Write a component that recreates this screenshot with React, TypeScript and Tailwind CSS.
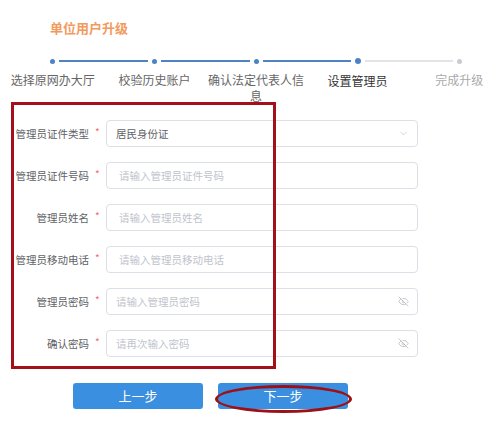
import { ChevronDown, EyeOff } from "lucide-react";

const steps = [
  { label: "选择原网办大厅", state: "done" },
  { label: "校验历史账户", state: "done" },
  { label: "确认法定代表人信息", state: "done" },
  { label: "设置管理员", state: "active" },
  { label: "完成升级", state: "todo" },
];

const fields = [
  { label: "管理员证件类型", value: "居民身份证", kind: "select" },
  { label: "管理员证件号码", placeholder: "请输入管理员证件号码" },
  { label: "管理员姓名", placeholder: "请输入管理员姓名" },
  { label: "管理员移动电话", placeholder: "请输入管理员移动电话" },
  { label: "管理员密码", placeholder: "请输入管理员密码", kind: "password" },
  { label: "确认密码", placeholder: "请再次输入密码", kind: "password" },
];

function StepBar() {
  return (
    <div>
      {/* dots + connecting lines */}
      <div className="ml-[50px] mt-[21px] flex h-[6px] w-[412px] items-center">
        {steps.map((s, i) => (
          <div key={s.label} className={i < steps.length - 1 ? "flex flex-1 items-center" : "flex items-center"}>
            <span
              className={
                s.state === "todo"
                  ? "block h-[5px] w-[5px] rounded-full bg-[#c8cbd0]"
                  : s.state === "active"
                  ? "block h-[6px] w-[6px] rounded-full bg-[#4a84c6]"
                  : "block h-[5px] w-[5px] rounded-full bg-[#4a84c6]"
              }
            />
            {i < steps.length - 1 && (
              <span
                className={
                  i < 3
                    ? "mx-[4px] block h-[2px] flex-1 bg-[#4f84c2]"
                    : "mx-[4px] block h-[2px] flex-1 bg-[#e2e4e8]"
                }
              />
            )}
          </div>
        ))}
      </div>

      {/* labels */}
      <div className="ml-[2px] mt-[8px] flex w-[510px]">
        {steps.map((s) => (
          <div
            key={s.label}
            className={
              s.state === "active"
                ? "w-[101.6px] px-[2px] pt-[1px] text-center text-[12px] leading-[16px] text-[#333]"
                : s.state === "todo"
                ? "w-[101.6px] px-[2px] text-center text-[12px] leading-[16px] text-[#aaa]"
                : "w-[101.6px] px-[2px] text-center text-[12px] leading-[16px] text-[#666]"
            }
          >
            {s.label}
          </div>
        ))}
      </div>
    </div>
  );
}

function FieldRow({ f }: { f: (typeof fields)[number] }) {
  return (
    <div className="flex h-[27px] items-center">
      <div className="w-[89px] text-right text-[10.5px] text-[#606266]">{f.label}</div>
      <div className="w-[17px] pb-[4px] pl-[6px] text-[10px] text-[#f56c6c]">*</div>
      <div className="flex h-[27px] w-[312px] items-center rounded-[4px] border border-[#dcdfe6] bg-white pl-[9px] pr-[8px]">
        {f.kind === "select" ? (
          <span className="flex-1 text-[10.5px] text-[#606266]">{f.value}</span>
        ) : (
          <span
            className={
              f.kind === "password"
                ? "flex-1 text-[10.5px] text-[#c0c4cc]"
                : "flex-1 pl-[3px] text-[10.5px] text-[#c0c4cc]"
            }
          >
            {f.placeholder}
          </span>
        )}
        {f.kind === "select" && <ChevronDown size={11} strokeWidth={1.3} className="text-[#b4b8bf]" />}
        {f.kind === "password" && <EyeOff size={11} strokeWidth={1.4} className="text-[#a8abb2]" />}
      </div>
    </div>
  );
}

export default function App() {
  return (
    <div
      className="relative h-[429px] w-[499px] overflow-hidden bg-white"
      style={{ fontFamily: '"Noto Sans CJK SC", "Noto Sans", "Liberation Sans", sans-serif' }}
    >
      {/* title */}
      <div className="pl-[50px] pt-[19px] text-[13px] font-bold leading-[18px] text-[#f29a5e]">单位用户升级</div>

      <StepBar />

      {/* form */}
      <div className="mt-[16px] flex flex-col gap-[15px]">
        {fields.map((f) => (
          <FieldRow key={f.label} f={f} />
        ))}
      </div>

      {/* actions */}
      <div className="ml-[73px] mt-[26px] flex gap-[15px]">
        <button className="h-[26px] w-[130px] rounded-[3px] bg-[#3b8fe0] text-[13px] text-white">上一步</button>
        <button className="h-[26px] w-[130px] rounded-[3px] bg-[#3b8fe0] text-[13px] text-white">下一步</button>
      </div>

      {/* annotation overlays */}
      <div className="pointer-events-none absolute left-[11px] top-[102px] h-[267px] w-[265px] border-[3px] border-[#a3101c]" />
      <div className="pointer-events-none absolute left-[215px] top-[385px] h-[28px] w-[137px] rounded-[50%] border-[3px] border-[#9c1018]" />
    </div>
  );
}
